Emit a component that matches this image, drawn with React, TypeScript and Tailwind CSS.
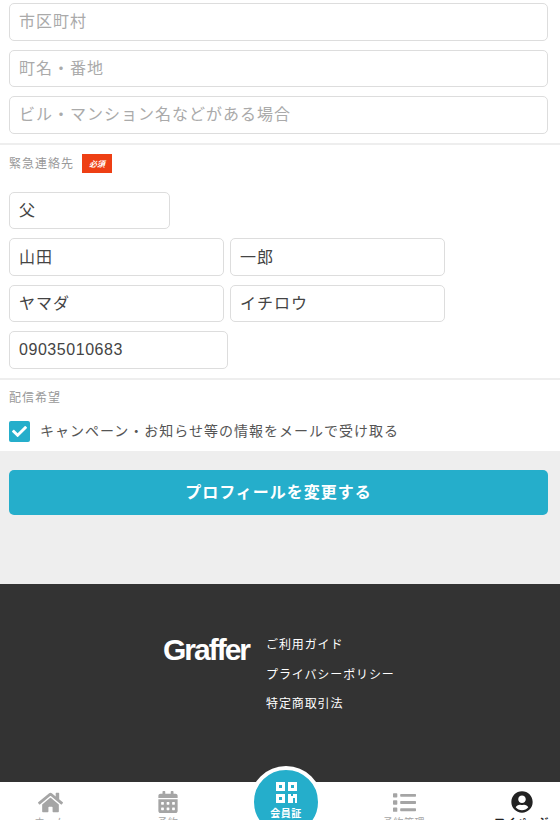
import { FaHome, FaCalendarAlt, FaList, FaUserCircle, FaCheck } from "react-icons/fa";

const font = "font-['Noto_Sans_CJK_JP','Noto_Sans',sans-serif]";

function Field({ value, placeholder, className }: { value?: string; placeholder?: string; className: string }) {
  return (
    <div
      className={`flex h-[37.5px] items-center rounded-[5px] border border-[#dddddd] bg-white px-[9px] text-[16px] ${
        placeholder ? "text-[#aaaaaa]" : "text-[#444444]"
      } ${className}`}
    >
      {value ?? placeholder}
    </div>
  );
}

function Tab({ icon, label, active, iconClass }: { icon: React.ReactNode; label: string; active?: boolean; iconClass: string }) {
  return (
    <div className={`flex w-[118px] flex-col items-center pt-[9px] ${active ? "text-[#222222]" : "text-[#a5a5a5]"}`}>
      <div className={`flex h-[22px] items-center ${iconClass}`}>{icon}</div>
      <div className={`mt-[2px] whitespace-nowrap text-[10px] leading-[14px] ${active ? "font-bold tracking-[1px]" : "tracking-[0.5px]"}`}>{label}</div>
    </div>
  );
}

const jp = "pb-[3px] tracking-[1px]";

export default function App() {
  return (
    <div className={`relative h-[820px] w-[560px] overflow-hidden bg-white ${font}`}>
      <section className="flex flex-col gap-[9px] px-[9px] pb-[9.5px] pt-[3px]">
        <Field placeholder="市区町村" className={`w-[539px] ${jp}`} />
        <Field placeholder="町名・番地" className={`w-[539px] ${jp}`} />
        <Field placeholder="ビル・マンション名などがある場合" className={`w-[539px] ${jp}`} />
      </section>
      <div className="h-[2px] bg-[#eeeeee]" />
      <section className="px-[9px] pt-[9px]">
        <div className="flex h-[19px] items-center gap-[8px]">
          <span className="pb-[1px] text-[12px] tracking-[1px] text-[#999999]">緊急連絡先</span>
          <span className="flex h-[19px] w-[30px] items-center justify-center bg-[#ee3f14] text-[8px] font-bold italic text-white">必須</span>
        </div>
        <div className="mt-[18.5px] flex flex-col gap-[9px]">
          <Field value="父" className="w-[161px] pb-[2px] tracking-[1px]" />
          <div className="flex gap-[6px]">
            <Field value="山田" className="w-[215px] pb-[2px] tracking-[1px]" />
            <Field value="一郎" className="w-[215px] pb-[2px] tracking-[1px]" />
          </div>
          <div className="flex gap-[6px]">
            <Field value="ヤマダ" className={`w-[215px] ${jp}`} />
            <Field value="イチロウ" className={`w-[215px] ${jp}`} />
          </div>
          <Field value="09035010683" className="w-[219px] font-['Liberation_Sans',sans-serif] tracking-[0.55px]" />
        </div>
      </section>
      <div className="mt-[9.5px] h-[2px] bg-[#eeeeee]" />
      <section className="h-[71px] px-[9px] pt-[7.5px]">
        <div className="text-[12px] leading-[18px] tracking-[1px] text-[#999999]">配信希望</div>
        <div className="mt-[14px] flex items-center gap-[10px]">
          <span className="flex h-[21px] w-[21px] items-center justify-center rounded-[2px] bg-[#25aecb] text-[15px] text-white">
            <FaCheck />
          </span>
          <span className="pb-[2px] text-[14px] leading-[21px] tracking-[1px] text-[#555555]">キャンペーン・お知らせ等の情報をメールで受け取る</span>
        </div>
      </section>
      <section className="h-[133px] bg-[#eeeeee] px-[9px] pt-[19px]">
        <div className="flex h-[45px] w-[539px] items-center justify-center rounded-[5px] bg-[#25aecb] pb-[4px] text-[16px] font-bold tracking-[1px] text-white">
          プロフィールを変更する
        </div>
      </section>
      <footer className="flex h-[198px] bg-[#333333] pl-[163px] pt-[50px] text-white">
        <div className="w-[103px] font-['Liberation_Sans',sans-serif] text-[30px] font-bold leading-[32px] tracking-[-2px]">Graffer</div>
        <div className="flex flex-col gap-[11.5px] pt-[1px] text-[12px] leading-[18px] tracking-[0.9px]">
          <span>ご利用ガイド</span>
          <span>プライバシーポリシー</span>
          <span>特定商取引法</span>
        </div>
      </footer>
      <nav className="-ml-[9px] flex h-[38px] w-[590px] overflow-hidden bg-white">
        <Tab icon={<FaHome />} iconClass="text-[25px]" label="ホーム" />
        <Tab icon={<FaCalendarAlt />} iconClass="text-[22px]" label="予約" />
        <div className="w-[118px]" />
        <Tab icon={<FaList />} iconClass="text-[23px]" label="予約管理" />
        <Tab icon={<FaUserCircle />} iconClass="text-[22px]" label="マイページ" active />
      </nav>
      <div className="absolute left-[250px] top-[766px] flex h-[72px] w-[72px] flex-col items-center rounded-full border-[4px] border-white bg-[#25aecb] pt-[12px] text-white">
        <svg width="21" height="21" viewBox="0 0 21 21" fill="currentColor" fillRule="evenodd">
          <path d="M0 0h9v9H0zM3 3v3h3V3zM12 0h9v9h-9zM15 3v3h3V3zM0 12h9v9H0zM3 15v3h3v-3zM12 12h3v2h2v-2h4v9h-2v-5h-2v5h-5z" />
        </svg>
        <span className="mt-[3px] text-[10px] font-bold leading-[14px] tracking-[0.5px]">会員証</span>
      </div>
    </div>
  );
}
